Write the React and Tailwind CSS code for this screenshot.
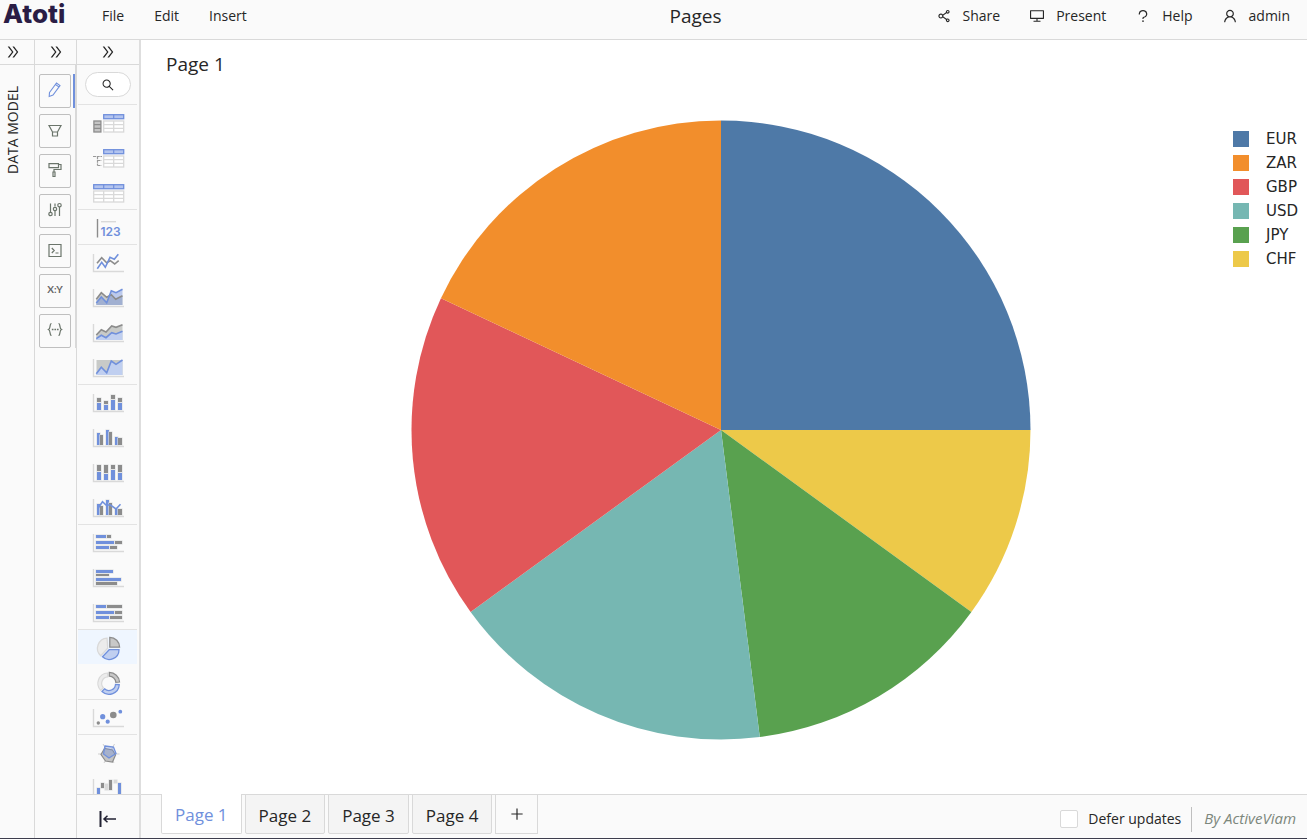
import React from "react";
import {
  AiOutlineDesktop,
  AiOutlineDoubleRight,
  AiOutlinePlus,
  AiOutlineQuestion,
  AiOutlineSearch,
  AiOutlineShareAlt,
  AiOutlineUser,
} from "react-icons/ai";

const BLUE = "#7090dc";
const GRAY = "#8c8c8c";
const LIGHT = "#d9d9d9";

const slices = [
  { name: "EUR", share: 25, color: "#4e79a7" },
  { name: "CHF", share: 10, color: "#edc949" },
  { name: "JPY", share: 13, color: "#59a14f" },
  { name: "USD", share: 17, color: "#76b7b2" },
  { name: "GBP", share: 17, color: "#e15759" },
  { name: "ZAR", share: 18, color: "#f28e2c" },
];

const legendOrder = ["EUR", "ZAR", "GBP", "USD", "JPY", "CHF"];

function point(cx, cy, r, percent) {
  const angle = (percent / 100) * Math.PI * 2;
  return `${cx + r * Math.sin(angle)} ${cy - r * Math.cos(angle)}`;
}

function wedge(cx, cy, r, from, to) {
  const large = to - from > 50 ? 1 : 0;
  return `M${cx} ${cy}L${point(cx, cy, r, from)}A${r} ${r} 0 ${large} 1 ${point(cx, cy, r, to)}Z`;
}

function ring(cx, cy, r, inner, from, to) {
  return `M${point(cx, cy, r, from)}A${r} ${r} 0 0 1 ${point(cx, cy, r, to)}L${point(cx, cy, inner, to)}A${inner} ${inner} 0 0 0 ${point(cx, cy, inner, from)}Z`;
}

function PieChart() {
  let start = 0;
  return (
    <svg viewBox="0 0 620 620" className="h-full max-w-full" role="img" aria-label="Pie chart">
      {slices.map((slice) => {
        const from = start;
        start += slice.share;
        return <path key={slice.name} d={wedge(310, 310, 309.5, from, start)} fill={slice.color} />;
      })}
    </svg>
  );
}

/* ---- widget icons ---- */

function Axis() {
  return <path d="M.5 10v17.5H31" fill="none" stroke={LIGHT} strokeWidth="1.4" />;
}

// [x, y, width, height, color]
function Bars({ items }) {
  return (
    <g stroke="#dfe1e2" strokeWidth="1.2" style={{ paintOrder: "stroke" }}>
      {items.map(([x, y, w, h, color], i) => (
        <rect key={i} x={x} y={y} width={w} height={h} fill={color} />
      ))}
    </g>
  );
}

function Grid({ x, width, columns }) {
  const step = width / columns;
  const dividers = Array.from({ length: columns - 1 }, (_, i) => x + step * (i + 1));
  return (
    <g fill="none">
      <rect x={x} y="10.7" width={width} height="4" fill="#b3c4ee" stroke={BLUE} strokeWidth="1.3" />
      <rect x={x} y="17" width={width} height="11" fill="#fff" stroke={LIGHT} strokeWidth="1.3" />
      <path d={`M${x} 20.7h${width}M${x} 24.3h${width}`} stroke={LIGHT} strokeWidth="1.3" />
      {dividers.map((d) => (
        <g key={d}>
          <path d={`M${d} 10.7v4`} stroke={BLUE} strokeWidth="1.2" />
          <path d={`M${d} 17v11`} stroke={LIGHT} strokeWidth="1.3" />
        </g>
      ))}
    </g>
  );
}

function Line({ points, color }) {
  return <polyline points={points} fill="none" stroke={color} strokeWidth="1.6" />;
}

const widgets = {
  "Pivot table": (
    <>
      <rect x=".9" y="17" width="7" height="11" fill="#c4c4c4" stroke={GRAY} strokeWidth="1.3" />
      <path d="M1 20.7h7M1 24.3h7" stroke={GRAY} strokeWidth="1.3" />
      <Grid x={10.7} width={20} columns={2} />
    </>
  ),
  "Tree table": (
    <>
      <path d="M0 17.5h9M4.5 17v9.5M4.5 21.5h4M4.5 26.5h4" fill="none" stroke="#999" strokeWidth="1.2" strokeDasharray="3 .7" />
      <Grid x={10.7} width={20} columns={2} />
    </>
  ),
  Table: <Grid x={0.7} width={30} columns={3} />,
  KPI: (
    <>
      <path d="M4.5 10v18.5" stroke={GRAY} strokeWidth="1.4" />
      <path d="M8 12.7h15" stroke={LIGHT} strokeWidth="1.4" />
      <text x="7.5" y="26.5" fontSize="12" fontWeight="600" fill={BLUE} fontFamily="Inter, sans-serif">
        123
      </text>
    </>
  ),
  "Line chart": (
    <>
      <Axis />
      <Line points="4,19.3 8.7,13.7 13.7,18.7 17.3,16.7 21.7,20 25.7,16.7" color={GRAY} />
      <Line points="4.3,24.7 8.7,18.3 12.3,23.3 17,13.3 21.3,15.3 25.3,10.3" color={BLUE} />
    </>
  ),
  "Area chart": (
    <>
      <Axis />
      <path d="M3.3 20.3 8.3 13.7 13.7 18.3 18.3 15.7 22.7 20.3 29.5 16.7V26H3.3Z" fill="#c8cac8" />
      <path d="M3.3 24 8.3 18 13.7 23.7 18.3 11.7 23 13.7 29.5 10.3V26H3.3Z" fill={BLUE} fillOpacity=".45" />
      <Line points="3.3,20.3 8.3,13.7 13.7,18.3 18.3,15.7 22.7,20.3 29.5,16.7" color={GRAY} />
      <Line points="3.3,24 8.3,18 13.7,23.7 18.3,11.7 23,13.7 29.5,10.3" color={BLUE} />
    </>
  ),
  "Stacked area chart": (
    <>
      <Axis />
      <path d="M3.3 21 8.3 15.7 13 18 18.7 12 23 13.3 29.5 10.7V26H3.3Z" fill="#c8cac8" />
      <path d="M3.3 24.7 8.3 21.3 13 23.7 18.7 18.7 23 20 29.5 17.3V26H3.3Z" fill="#c0cff0" />
      <Line points="3.3,21 8.3,15.7 13,18 18.7,12 23,13.3 29.5,10.7" color={GRAY} />
      <Line points="3.3,24.7 8.3,21.3 13,23.7 18.7,18.7 23,20 29.5,17.3" color={BLUE} />
    </>
  ),
  "100% area chart": (
    <>
      <Axis />
      <path d="M3.5 11h26v15h-26Z" fill="#c8cac8" />
      <path d="M3.3 24.7 8.3 18.3 13.7 23.7 18.3 12 23 15.3 29.5 11V26H3.3Z" fill="#c0cff0" />
      <Line points="3.3,24.7 8.3,18.3 13.7,23.7 18.3,12 23,15.3 29.5,11" color={BLUE} />
    </>
  ),
  "Stacked column chart": (
    <>
      <Axis />
      <Bars
        items={[
          [4, 14, 4, 4, GRAY], [4, 19, 4, 7, BLUE],
          [11, 17, 4, 3, GRAY], [11, 21, 4, 5, BLUE],
          [18, 11, 4, 4, GRAY], [18, 16, 4, 10, BLUE],
          [25, 14, 4, 4, GRAY], [25, 19, 4, 7, BLUE],
        ]}
      />
    </>
  ),
  "Clustered column chart": (
    <>
      <Axis />
      <Bars
        items={[
          [4, 14, 3, 12, BLUE], [7, 16, 3, 10, GRAY],
          [13, 11, 3, 15, BLUE], [16, 13, 3, 13, GRAY],
          [22, 18, 3, 8, BLUE], [25, 19, 4, 7, GRAY],
        ]}
      />
    </>
  ),
  "100% column chart": (
    <>
      <Axis />
      <Bars
        items={[
          [4, 11, 4, 6, GRAY], [4, 18, 4, 8, BLUE],
          [11, 11, 4, 8, GRAY], [11, 20, 4, 6, BLUE],
          [18, 11, 4, 4, GRAY], [18, 16, 4, 10, BLUE],
          [25, 11, 4, 7, GRAY], [25, 19, 4, 7, BLUE],
        ]}
      />
    </>
  ),
  "Combo chart": (
    <>
      <Axis />
      <Bars
        items={[
          [4, 15, 3, 11, BLUE], [7, 17, 3, 9, GRAY],
          [13, 11, 3, 15, BLUE], [16, 14, 3, 12, GRAY],
          [22, 20, 3, 6, BLUE], [25, 20, 4, 6, GRAY],
        ]}
      />
      <Line points="4.5,20 9.5,12.7 13,16 17.5,16 23,20 27.5,15.3" color={BLUE} />
    </>
  ),
  "Stacked bar chart": (
    <>
      <Axis />
      <Bars
        items={[
          [3, 11, 10, 3, BLUE], [14, 11, 4, 3, GRAY],
          [3, 17, 18, 3, BLUE], [22, 17, 7, 3, GRAY],
          [3, 22, 13, 3, BLUE], [17, 22, 7, 3, GRAY],
        ]}
      />
    </>
  ),
  "Clustered bar chart": (
    <>
      <Axis />
      <Bars
        items={[
          [3, 11, 17, 3, BLUE], [3, 15, 13, 2, GRAY],
          [3, 19, 25, 3, BLUE], [3, 23, 21, 3, GRAY],
        ]}
      />
    </>
  ),
  "100% bar chart": (
    <>
      <Axis />
      <Bars
        items={[
          [3, 11, 10, 3, BLUE], [14, 11, 15, 3, GRAY],
          [3, 17, 18, 3, BLUE], [22, 17, 7, 3, GRAY],
          [3, 22, 13, 3, BLUE], [17, 22, 12, 3, GRAY],
        ]}
      />
    </>
  ),
  "Pie chart": (
    <g strokeWidth="1.3">
      <path d={wedge(14.7, 19.3, 10.2, 62, 99)} fill="#ececec" stroke={LIGHT} />
      <path d={wedge(16.8, 18.2, 9.8, 0, 25)} fill="#c8c8c8" stroke={GRAY} />
      <path d={wedge(16.2, 20.7, 9.8, 25, 62)} fill="#c0cff0" stroke={BLUE} />
    </g>
  ),
  "Donut chart": (
    <g strokeWidth="1.2">
      <path d={ring(15.2, 19.3, 10.3, 6.5, 63, 99)} fill="#ececec" stroke={LIGHT} />
      <path d={ring(16.3, 18.7, 10.3, 6.5, 0, 24)} fill="#c8c8c8" stroke={GRAY} />
      <path d={ring(16, 20, 10.3, 6.5, 26, 62)} fill="#c0cff0" stroke={BLUE} />
    </g>
  ),
  "Scatter chart": (
    <>
      <Axis />
      <circle cx="5.3" cy="24" r="1.7" fill={GRAY} />
      <circle cx="9.7" cy="17.7" r="2.6" fill={BLUE} />
      <circle cx="14.7" cy="22.7" r="2.1" fill={BLUE} />
      <circle cx="20.3" cy="16" r="3.3" fill={GRAY} />
      <circle cx="27.3" cy="12.7" r="1.9" fill={BLUE} />
    </>
  ),
  "Radar chart": (
    <>
      <path d="M5 20h21.5M10 10l11 19M21.5 10 11 29" stroke="#cfcfcf" />
      <path d="M11.5 14.5 8 20.5l4.5 6.5 7 1 3-7-3-5z" fill="#c4c4c4" stroke={GRAY} strokeWidth="1.2" />
      <path d="m12 12 8.5 1 2.5 6.5-7 4.5-5.5-4z" fill={BLUE} fillOpacity=".35" stroke={BLUE} strokeWidth="1.3" />
    </>
  ),
  "Waterfall chart": (
    <>
      <Axis />
      <Bars
        items={[
          [4, 19, 3, 7, BLUE], [8, 14, 3, 5, GRAY], [12, 15, 3, 6, LIGHT],
          [16, 11, 3, 10, GRAY], [21, 11, 3, 3, LIGHT], [25, 14, 3, 12, BLUE],
        ]}
      />
    </>
  ),
};

// the first widget of each of these opens a new group
const groupStarts = [
  "Pivot table",
  "KPI",
  "Line chart",
  "Stacked column chart",
  "Stacked bar chart",
  "Pie chart",
  "Scatter chart",
  "Radar chart",
];

/* ---- editor icons ---- */

const tools = {
  Edit: <path d="M2.5 10.5 9.5 1l3.500 2.500-7 9.500-3.800 1.500ZM8.500 2.500l3.300 2.400" strokeWidth="1.1" />,
  Filters: <path d="M2 3.500h12l-3.500 6.500H5.500ZM5.500 10v4h5v-4" />,
  Style: <path d="M2 1.6h9.5v4H2ZM11.5 2.5H14v5H7v2.5M6 10h2v4.5H6Z" />,
  Settings: (
    <>
      <path d="M3.5 1.5V10M8 1.5v3M8 8.5V14M12.500 5v9" />
      <circle cx="3.5" cy="12" r="1.7" />
      <circle cx="8" cy="7" r="1.7" />
      <circle cx="12.5" cy="3.2" r="1.7" />
    </>
  ),
  "Query editor": <path d="M2 2.5h12v12H2ZM4.8 6l2.4 2.5-2.4 2.5M8.5 11h3" />,
  "X:Y": (
    <text x="8" y="11" textAnchor="middle" fontSize="10" fontWeight="700" fill="#666" stroke="none" fontFamily="Lato, sans-serif">
      X:Y
    </text>
  ),
  State: (
    <>
      <path d="M4.5 1.5C2.2 1.5 4 6.5 1.5 7.5 4 8.5 2.2 13.5 4.5 13.5M11.5 1.5C13.8 1.5 12 6.5 14.5 7.5 12 8.5 13.8 13.5 11.5 13.5" />
      <path d="M4.8 7.5h6.8" strokeWidth="1.6" strokeDasharray="1.7 .9" />
    </>
  ),
};

function Expand({ label }) {
  return (
    <button aria-label={label} className="flex h-6 w-full shrink-0 items-center justify-center">
      <AiOutlineDoubleRight className="size-4" />
    </button>
  );
}

function Header() {
  const actions = [
    ["Share", AiOutlineShareAlt],
    ["Present", AiOutlineDesktop],
    ["Help", AiOutlineQuestion],
    ["admin", AiOutlineUser],
  ];
  return (
    <header className="flex h-10 shrink-0 border-b border-[#d9d9d9] bg-[#fafafa]">
      <div className="w-[84px] shrink-0 pl-[3px] font-[family-name:Inter] text-[26px] leading-7 font-extrabold text-[#2a1d45]">
        Atoti
      </div>
      <div className="grid h-8 flex-1 grid-cols-[1fr_auto_1fr] items-center">
        <nav className="flex gap-[30px] pl-[18px]">
          <button>File</button>
          <button>Edit</button>
          <button>Insert</button>
        </nav>
        <h1 className="pt-0.5 text-[19px]">Pages</h1>
        <div className="flex justify-end gap-[29px] pr-[17px]">
          {actions.map(([label, Icon]) => (
            <button key={label} className="flex items-center gap-[11px]">
              <Icon className="size-4" />
              {label}
            </button>
          ))}
        </div>
      </div>
    </header>
  );
}

function DataModelColumn() {
  return (
    <aside className="flex w-[35px] shrink-0 flex-col border-r border-[#d9d9d9]">
      <div className="border-b border-[#d9d9d9] pr-2">
        <Expand label="Expand data model" />
      </div>
      <button className="mt-[21px] ml-[3px] w-5 rotate-180 leading-5 [writing-mode:vertical-rl]">DATA MODEL</button>
    </aside>
  );
}

function ToolColumn() {
  return (
    <aside className="flex w-[42px] shrink-0 flex-col border-r border-[#d9d9d9]">
      <div className="border-b border-[#d9d9d9]">
        <Expand label="Expand editors" />
      </div>
      <div className="flex flex-col gap-[6px] border-r border-[#d9d9d9] pt-[9px] pl-1">
        {Object.entries(tools).map(([name, icon]) => (
          <div key={name} className={name === "Edit" ? "border-r-2 border-[#7090dc]" : ""}>
            <button
              aria-label={name}
              className={`flex h-[34px] w-8 justify-center rounded-xs border border-[#bfbfbf] pt-[7px] ${name === "Edit" ? "text-[#7090dc]" : "text-[#6b756b]"}`}
            >
              <svg viewBox="0 0 16 16" className="size-4" fill="none" stroke="currentColor" strokeWidth="1.2">
                {icon}
              </svg>
            </button>
          </div>
        ))}
      </div>
    </aside>
  );
}

function WidgetColumn() {
  return (
    <aside className="flex w-16 shrink-0 flex-col border-r-2 border-[#dedede]">
      <div className="border-b border-[#d9d9d9]">
        <Expand label="Expand widgets" />
      </div>
      <div className="flex h-[39px] shrink-0 items-center justify-center">
        <button aria-label="Search widgets" className="flex h-[25px] w-[46px] items-center justify-center rounded-full border border-[#d9d9d9] bg-white">
          <AiOutlineSearch className="size-[14px]" />
        </button>
      </div>
      <div className="mr-0.5 ml-px min-h-0 flex-1 overflow-hidden">
        {Object.entries(widgets).map(([name, icon]) => (
          <button
            key={name}
            aria-label={name}
            className={`block h-[35px] w-full ${groupStarts.includes(name) ? "shadow-[inset_0_1px_#e3e3e3]" : ""} ${name === "Pie chart" ? "bg-[#eff6ff]" : ""}`}
          >
            <svg viewBox="-3 0 35 35" className="mx-auto size-[35px]">
              {icon}
            </svg>
          </button>
        ))}
      </div>
      <button aria-label="Collapse" className="flex h-11 shrink-0 items-center justify-center border-t border-[#d9d9d9] pt-1">
        <svg viewBox="0 0 18 16" className="h-4 w-[18px]" fill="none" stroke="#222233" strokeWidth="1.5">
          <path d="M1.5 0v16" strokeWidth="2" />
          <path d="M5 8h12M8.5 4.8 5 8l3.5 3.2" />
        </svg>
      </button>
    </aside>
  );
}

function Footer() {
  return (
    <footer className="flex h-11 shrink-0 items-start justify-between bg-[#fafafa] shadow-[inset_0_1px_#d9d9d9]">
      <div className="flex h-10 gap-[3px] pl-5 text-[17px]">
        <button className="rounded-b-xs border border-t-0 border-[#d9d9d9] bg-white px-[13px] pt-1 text-[#7090dc]">Page 1</button>
        {["Page 2", "Page 3", "Page 4"].map((page) => (
          <button key={page} className="rounded-b-xs border border-[#d9d9d9] bg-[#f4f4f4] px-[13px] pt-1">
            {page}
          </button>
        ))}
        <button aria-label="Add page" className="flex w-[43px] items-center justify-center border border-[#d9d9d9]">
          <AiOutlinePlus className="size-4" />
        </button>
      </div>
      <div className="flex h-11 items-center pt-[6px] pr-[11px]">
        <label className="flex items-center gap-[10px]">
          <input type="checkbox" className="size-[18px] appearance-none rounded-xs border border-[#d9d9d9] bg-white" />
          Defer updates
        </label>
        <div className="mr-3 ml-[10px] h-[25px] border-l border-[#bfbfbf]" />
        <a href="#activeviam" className="text-[15px] text-[#7c877c] italic">
          By ActiveViam
        </a>
      </div>
    </footer>
  );
}

function App() {
  return (
    <div className="flex h-screen flex-col border-b border-[#3d3d4d] bg-[#fafafa] font-[family-name:'Open_Sans',sans-serif] text-sm text-[#262626]">
      <Header />
      <div className="flex min-h-0 flex-1">
        <DataModelColumn />
        <ToolColumn />
        <WidgetColumn />
        <div className="flex min-w-0 flex-1 flex-col">
          <main className="flex min-h-0 flex-1 flex-col bg-white">
            <h2 className="flex h-[50px] shrink-0 items-center pl-[25px] text-[19px]">Page 1</h2>
            <div className="flex min-h-0 flex-1">
              <div className="flex min-w-0 flex-1 justify-center pt-[30px] pb-[54px] pl-[67px]">
                <PieChart />
              </div>
              <ul className="w-[74px] shrink-0 pt-[37px] font-[family-name:'DejaVu_Sans',Verdana,sans-serif] text-[15px]">
                {legendOrder.map((name) => (
                  <li key={name} className="flex h-6 items-center gap-[17px]">
                    <svg className="size-4">
                      <rect width="16" height="16" fill={slices.find((s) => s.name === name).color} />
                    </svg>
                    <span className="pt-0.5">{name}</span>
                  </li>
                ))}
              </ul>
            </div>
          </main>
          <Footer />
        </div>
      </div>
    </div>
  );
}

export default App;
